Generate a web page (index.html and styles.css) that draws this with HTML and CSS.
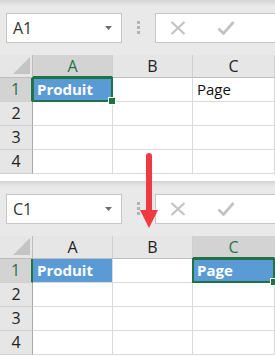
FILE: index.html
```html
<!DOCTYPE html>
<html lang="fr">
<head>
    <meta charset="UTF-8"/>
    <title>Excel sélection</title>
    <link rel="stylesheet" href="styles.css">
</head>
<body>
<div class="page">
    <!-- avant : A1 sélectionnée -->
    <div class="panel">
        <div class="toolbar">
            <div class="namebox">
                <span>A1</span>
                <svg class="caret" width="7" height="4" viewBox="0 0 7 4"><path d="M0 0h7L3.5 4z" fill="#6d6d6d"/></svg>
            </div>
            <div class="grip"><i></i><i></i><i></i></div>
            <div class="formula">
                <svg width="16" height="14" viewBox="0 0 16 14"><path d="M1.5 1L14.5 13M14.5 1L1.5 13" stroke="#c3c3c3" stroke-width="2.2" fill="none"/></svg>
                <svg width="18" height="14" viewBox="0 0 18 14"><path d="M1.5 7.5L6.5 12.5L16.5 1" stroke="#c3c3c3" stroke-width="2.8" fill="none"/></svg>
            </div>
        </div>
        <div class="sheet">
            <div class="corner"><svg width="17" height="17" viewBox="0 0 17 17"><path d="M17 0V17H0z" fill="#c4c4c4"/></svg></div>
            <div class="colhead sel">A</div>
            <div class="colhead">B</div>
            <div class="colhead">C</div>

            <div class="rowhead sel">1</div>
            <div class="cell fill active">Produit</div>
            <div class="cell"></div>
            <div class="cell">Page</div>

            <div class="rowhead">2</div>
            <div class="cell"></div><div class="cell"></div><div class="cell"></div>
            <div class="rowhead">3</div>
            <div class="cell"></div><div class="cell"></div><div class="cell"></div>
            <div class="rowhead">4</div>
            <div class="cell"></div><div class="cell"></div><div class="cell"></div>
        </div>
    </div>

    <!-- après : C1 sélectionnée -->
    <div class="panel">
        <div class="toolbar">
            <div class="namebox">
                <span>C1</span>
                <svg class="caret" width="7" height="4" viewBox="0 0 7 4"><path d="M0 0h7L3.5 4z" fill="#6d6d6d"/></svg>
            </div>
            <div class="grip"><i></i><i></i><i></i></div>
            <div class="formula">
                <svg width="16" height="14" viewBox="0 0 16 14"><path d="M1.5 1L14.5 13M14.5 1L1.5 13" stroke="#c3c3c3" stroke-width="2.2" fill="none"/></svg>
                <svg width="18" height="14" viewBox="0 0 18 14"><path d="M1.5 7.5L6.5 12.5L16.5 1" stroke="#c3c3c3" stroke-width="2.8" fill="none"/></svg>
            </div>
        </div>
        <div class="sheet">
            <div class="corner"><svg width="17" height="17" viewBox="0 0 17 17"><path d="M17 0V17H0z" fill="#c4c4c4"/></svg></div>
            <div class="colhead">A</div>
            <div class="colhead">B</div>
            <div class="colhead sel">C</div>

            <div class="rowhead sel">1</div>
            <div class="cell fill">Produit</div>
            <div class="cell"></div>
            <div class="cell fill active">Page</div>

            <div class="rowhead">2</div>
            <div class="cell"></div><div class="cell"></div><div class="cell"></div>
            <div class="rowhead">3</div>
            <div class="cell"></div><div class="cell"></div><div class="cell"></div>
            <div class="rowhead">4</div>
            <div class="cell"></div><div class="cell"></div><div class="cell"></div>
        </div>
    </div>

    <!-- flèche rouge -->
    <svg class="arrow" width="20" height="78" viewBox="0 0 20 78">
        <path d="M10 3V60" stroke="#ee3a40" stroke-width="6" stroke-linecap="round"/>
        <path d="M1 57H19L10 75z" fill="#ee3a40"/>
    </svg>
</div>
</body>
</html>
```
FILE: styles.css
```css
* {
    margin: 0;
    padding: 0;
    box-sizing: border-box;
}

body {
    background: #fff;
    font-family: "Open Sans", "Liberation Sans", sans-serif;
}

.page {
    position: relative;
    width: 275px;
    height: 356px;
    overflow: hidden;
}

.panel {
    background: linear-gradient(#d4d4d4, #e9e9e9 6px);
    overflow: hidden;
    margin-bottom: 7px;
}

.toolbar {
    display: flex;
    align-items: flex-start;
    height: 55px;
    padding: 13px 0 0 6px;
}

.namebox {
    width: 127px;
    height: 30px;
    background: #fff;
    border: 1px solid #c6c6c6;
    display: flex;
    align-items: center;
    justify-content: space-between;
    padding: 0 9px 0 6px;
    font-size: 16px;
    color: #333;
}

.grip {
    width: 37px;
    display: flex;
    flex-direction: column;
    align-items: center;
    gap: 2px;
    padding-top: 8px;
}

.grip i {
    width: 3px;
    height: 3px;
    background: #b3b3b3;
}

.formula {
    flex: 0 0 120px;
    height: 30px;
    background: #fff;
    border: 1px solid #c6c6c6;
    border-right: none;
    display: flex;
    align-items: center;
    gap: 31px;
    padding-left: 14px;
}

.sheet {
    display: grid;
    grid-template-columns: 33px 80px 80px 82px;
    grid-template-rows: 23px repeat(4, 24px);
    background: #fff;
    font-size: 15px;
}

.corner {
    background: #e6e6e6;
    border-right: 1px solid #bdbdbd;
    border-bottom: 1px solid #bdbdbd;
    display: flex;
    align-items: flex-end;
    justify-content: flex-end;
    padding: 0 2px 3px 0;
}

.colhead {
    background: #e6e6e6;
    border-right: 1px solid #cfcfcf;
    border-bottom: 1px solid #bdbdbd;
    text-align: center;
    line-height: 22px;
    color: #222;
    font-size: 16px;
}

.rowhead {
    background: #e6e6e6;
    border-right: 1px solid #a9a9a9;
    border-bottom: 1px solid #cfcfcf;
    text-align: center;
    line-height: 23px;
    color: #222;
    font-size: 16px;
}

.colhead.sel {
    background: #d3d3d3;
    color: #217346;
    border-bottom: 2px solid #217346;
}

.rowhead.sel {
    background: #d3d3d3;
    color: #217346;
    border-right: 2px solid #217346;
}

.cell {
    border-right: 1px solid #dadada;
    border-bottom: 1px solid #dadada;
    line-height: 23px;
    padding-left: 4px;
    color: #111;
    white-space: nowrap;
    position: relative;
}

.cell.fill {
    background: #5b9bd5;
    color: #fff;
    font-weight: bold;
}

.cell.active {
    box-shadow: inset 0 0 0 1px #fff;
}

/* cadre vert de la cellule active */
.cell.active::after {
    content: "";
    position: absolute;
    top: -1px;
    left: -1px;
    right: -1px;
    bottom: -1px;
    border: 2px solid #217346;
}

/* poignée de recopie */
.cell.active::before {
    content: "";
    position: absolute;
    right: -4px;
    bottom: -4px;
    width: 6px;
    height: 6px;
    background: #217346;
    border: 1px solid #fff;
    z-index: 2;
}

.arrow {
    position: absolute;
    left: 139px;
    top: 153px;
}
```
